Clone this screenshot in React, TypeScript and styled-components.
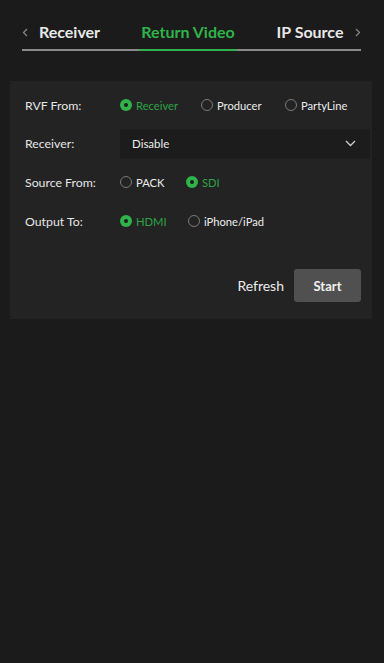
import React from "react";
import styled, { createGlobalStyle } from "styled-components";

const GREEN = "#2fb34a";

const GlobalStyles = createGlobalStyle`
    html, body {
        margin: 0;
        padding: 0;
        background: #1b1b1b;
        font-family: Lato, "Open Sans", sans-serif;
        color: #e6e6e6;
    }
`;

const Page = styled.div`
    width: 384px;
    min-height: 663px;
    background: #1b1b1b;
    padding-top: 20px;
    box-sizing: border-box;
`;

const TabBar = styled.div`
    margin: 0 23px 0 22px;
    height: 29px;
    display: flex;
    align-items: flex-start;
    gap: 35px;
    border-bottom: 2px solid #8a8a8a;
`;

const Chevron = styled.span<{ $side: "left" | "right" }>`
    width: 14px;
    height: 24px;
    margin: ${(p) => (p.$side === "left" ? "0 -35px 0 0" : "0 0 0 -35px")};
    display: flex;
    align-items: center;
    justify-content: ${(p) => (p.$side === "left" ? "flex-start" : "flex-end")};
`;

const Tab = styled.div<{ $active?: boolean; $w: number }>`
    position: relative;
    width: ${(p) => p.$w}px;
    flex-shrink: 0;
    text-align: center;
    font-size: 16px;
    font-weight: 700;
    line-height: 24px;
    color: ${(p) => (p.$active ? GREEN : "#e8e8e8")};
    height: 29px;
    &::after {
        content: "";
        position: absolute;
        left: 0;
        right: 0;
        bottom: -2px;
        height: 2px;
        background: ${(p) => (p.$active ? GREEN : "transparent")};
    }
`;

const Panel = styled.div`
    margin: 30px 12px 0 10px;
    background: #232323;
    padding: 9px 2px 16px 15px;
    height: 238px;
    box-sizing: border-box;
`;

const Row = styled.div`
    display: flex;
    align-items: center;
    height: 30px;
    margin-bottom: 8.7px;
`;

const Label = styled.div`
    width: 95px;
    font-size: 12.3px;
    color: #e6e6e6;
`;

const Options = styled.div`
    display: flex;
    align-items: center;
`;

const Radio = styled.label<{ $checked?: boolean; $w: number }>`
    display: flex;
    align-items: center;
    width: ${(p) => p.$w}px;
    font-size: 11.2px;
    color: ${(p) => (p.$checked ? "#2ca446" : "#ececec")};
`;

const Dot = styled.span<{ $checked?: boolean }>`
    width: 12px;
    height: 12px;
    border-radius: 50%;
    box-sizing: border-box;
    margin-right: 4px;
    background: ${(p) => (p.$checked ? GREEN : "transparent")};
    border: ${(p) => (p.$checked ? "none" : "1px solid #7a7a7a")};
    display: flex;
    align-items: center;
    justify-content: center;
    &::after {
        content: "";
        width: 4px;
        height: 4px;
        border-radius: 50%;
        background: ${(p) => (p.$checked ? "#1d1d1d" : "transparent")};
    }
`;

const Select = styled.div`
    flex: 1;
    height: 30px;
    background: #1c1c1c;
    display: flex;
    align-items: center;
    justify-content: space-between;
    padding: 0 14px 0 12px;
    font-size: 11.5px;
    color: #ececec;
`;

const Actions = styled.div`
    display: flex;
    justify-content: flex-end;
    align-items: center;
    gap: 10px;
    margin-top: 33px;
    padding-right: 9px;
`;

const TextButton = styled.button`
    background: none;
    border: none;
    padding: 0;
    font-family: inherit;
    font-size: 14px;
    color: #ececec;
`;

const StartButton = styled.button`
    width: 67px;
    height: 33px;
    border: none;
    border-radius: 3px;
    background: #505050;
    color: #f0f0f0;
    font-family: inherit;
    font-size: 13px;
    font-weight: 700;
`;

const RadioOption: React.FC<{ label: string; checked?: boolean; w: number }> = ({ label, checked, w }) => (
    <Radio $checked={checked} $w={w}>
        <Dot $checked={checked} />
        {label}
    </Radio>
);

export default function App() {
    return (
        <Page>
            <GlobalStyles />
            <TabBar>
                <Chevron $side="left">
                    <svg width="6" height="9" viewBox="0 0 6 9">
                        <path d="M5 1L1.5 4.5L5 8" fill="none" stroke="#8a8a8a" strokeWidth="1.2" />
                    </svg>
                </Chevron>
                <Tab $w={69}>Receiver</Tab>
                <Tab $w={98} $active>Return Video</Tab>
                <Tab $w={76}>IP Source</Tab>
                <Chevron $side="right">
                    <svg width="6" height="9" viewBox="0 0 6 9">
                        <path d="M1 1L4.5 4.5L1 8" fill="none" stroke="#8a8a8a" strokeWidth="1.2" />
                    </svg>
                </Chevron>
            </TabBar>
            <Panel>
                <Row>
                    <Label>RVF From:</Label>
                    <Options>
                        <RadioOption label="Receiver" checked w={81} />
                        <RadioOption label="Producer" w={84} />
                        <RadioOption label="PartyLine" w={80} />
                    </Options>
                </Row>
                <Row>
                    <Label>Receiver:</Label>
                    <Select>
                        Disable
                        <svg width="11" height="7" viewBox="0 0 11 7">
                            <path d="M1 1L5.5 5.5L10 1" fill="none" stroke="#cfcfcf" strokeWidth="1.3" />
                        </svg>
                    </Select>
                </Row>
                <Row>
                    <Label>Source From:</Label>
                    <Options>
                        <RadioOption label="PACK" w={66} />
                        <RadioOption label="SDI" checked w={50} />
                    </Options>
                </Row>
                <Row>
                    <Label>Output To:</Label>
                    <Options>
                        <RadioOption label="HDMI" checked w={68} />
                        <RadioOption label="iPhone/iPad" w={90} />
                    </Options>
                </Row>
                <Actions>
                    <TextButton>Refresh</TextButton>
                    <StartButton>Start</StartButton>
                </Actions>
            </Panel>
        </Page>
    );
}
